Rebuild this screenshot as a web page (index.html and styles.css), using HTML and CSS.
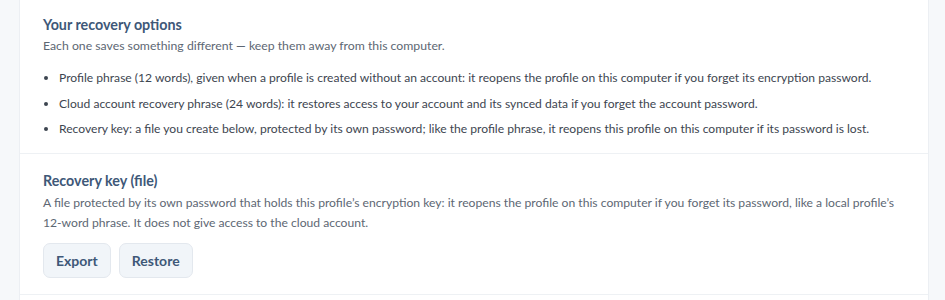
FILE: index.html
```html
<!DOCTYPE html>
<html lang="en">
<head>
<meta charset="utf-8">
<title>Recovery options</title>
<link rel="stylesheet" href="styles.css">
</head>
<body>
<div class="page">
  <div class="card">
    <section class="section">
      <h2 class="title">Your recovery options</h2>
      <p class="subtitle">Each one saves something different — keep them away from this computer.</p>
      <ul class="list">
        <li>Profile phrase (12 words), given when a profile is created without an account: it reopens the profile on this computer if you forget its encryption password.</li>
        <li>Cloud account recovery phrase (24 words): it restores access to your account and its synced data if you forget the account password.</li>
        <li>Recovery key: a file you create below, protected by its own password; like the profile phrase, it reopens this profile on this computer if its password is lost.</li>
      </ul>
    </section>
    <section class="section section-two">
      <h2 class="title">Recovery key (file)</h2>
      <p class="desc">A file protected by its own password that holds this profile’s encryption key: it reopens the profile on this computer if you forget its password, like a local profile’s 12-word phrase. It does not give access to the cloud account.</p>
      <div class="actions">
        <button class="btn" type="button">Export</button>
        <button class="btn" type="button">Restore</button>
      </div>
    </section>
  </div>
</div>
</body>
</html>
```
FILE: styles.css
```css
html, body {
  margin: 0;
  padding: 0;
  background: #f6f8fa;
  font-family: "Lato", "Open Sans", sans-serif;
}
.page {
  padding: 0 16px 0 19px;
}
.card {
  background: #ffffff;
  border: 1px solid #eceff3;
  border-top: none;
  padding-bottom: 40px;
}
.section {
  padding: 15px 23px 15px 23px;
  border-bottom: 1px solid #eef1f4;
}
.section-two {
  padding-top: 17px;
  padding-bottom: 16px;
}
.title {
  margin: 0;
  font-size: 14.3px;
  line-height: 20px;
  font-weight: 700;
  color: #3e5878;
}
.subtitle {
  margin: 2px 0 0 0;
  font-size: 12.25px;
  line-height: 18px;
  color: #5d6773;
}
.list {
  margin: 14px 0 0 0;
  padding: 0 0 0 16px;
  font-size: 12.1px;
  line-height: 18px;
  color: #3d4550;
}
.list li {
  margin-bottom: 7.5px;
}
.list li:last-child {
  margin-bottom: 0;
}
.desc {
  margin: 2px 0 0 0;
  font-size: 12.15px;
  line-height: 20px;
  color: #5d6773;
}
.actions {
  display: flex;
  gap: 8px;
  margin-top: 10px;
}
.btn {
  font-family: inherit;
  font-size: 14px;
  font-weight: 700;
  color: #3e5878;
  background: #f1f5f9;
  border: 1px solid #e3e8ee;
  border-radius: 7px;
  height: 35px;
  padding: 0 12px;
}
```
